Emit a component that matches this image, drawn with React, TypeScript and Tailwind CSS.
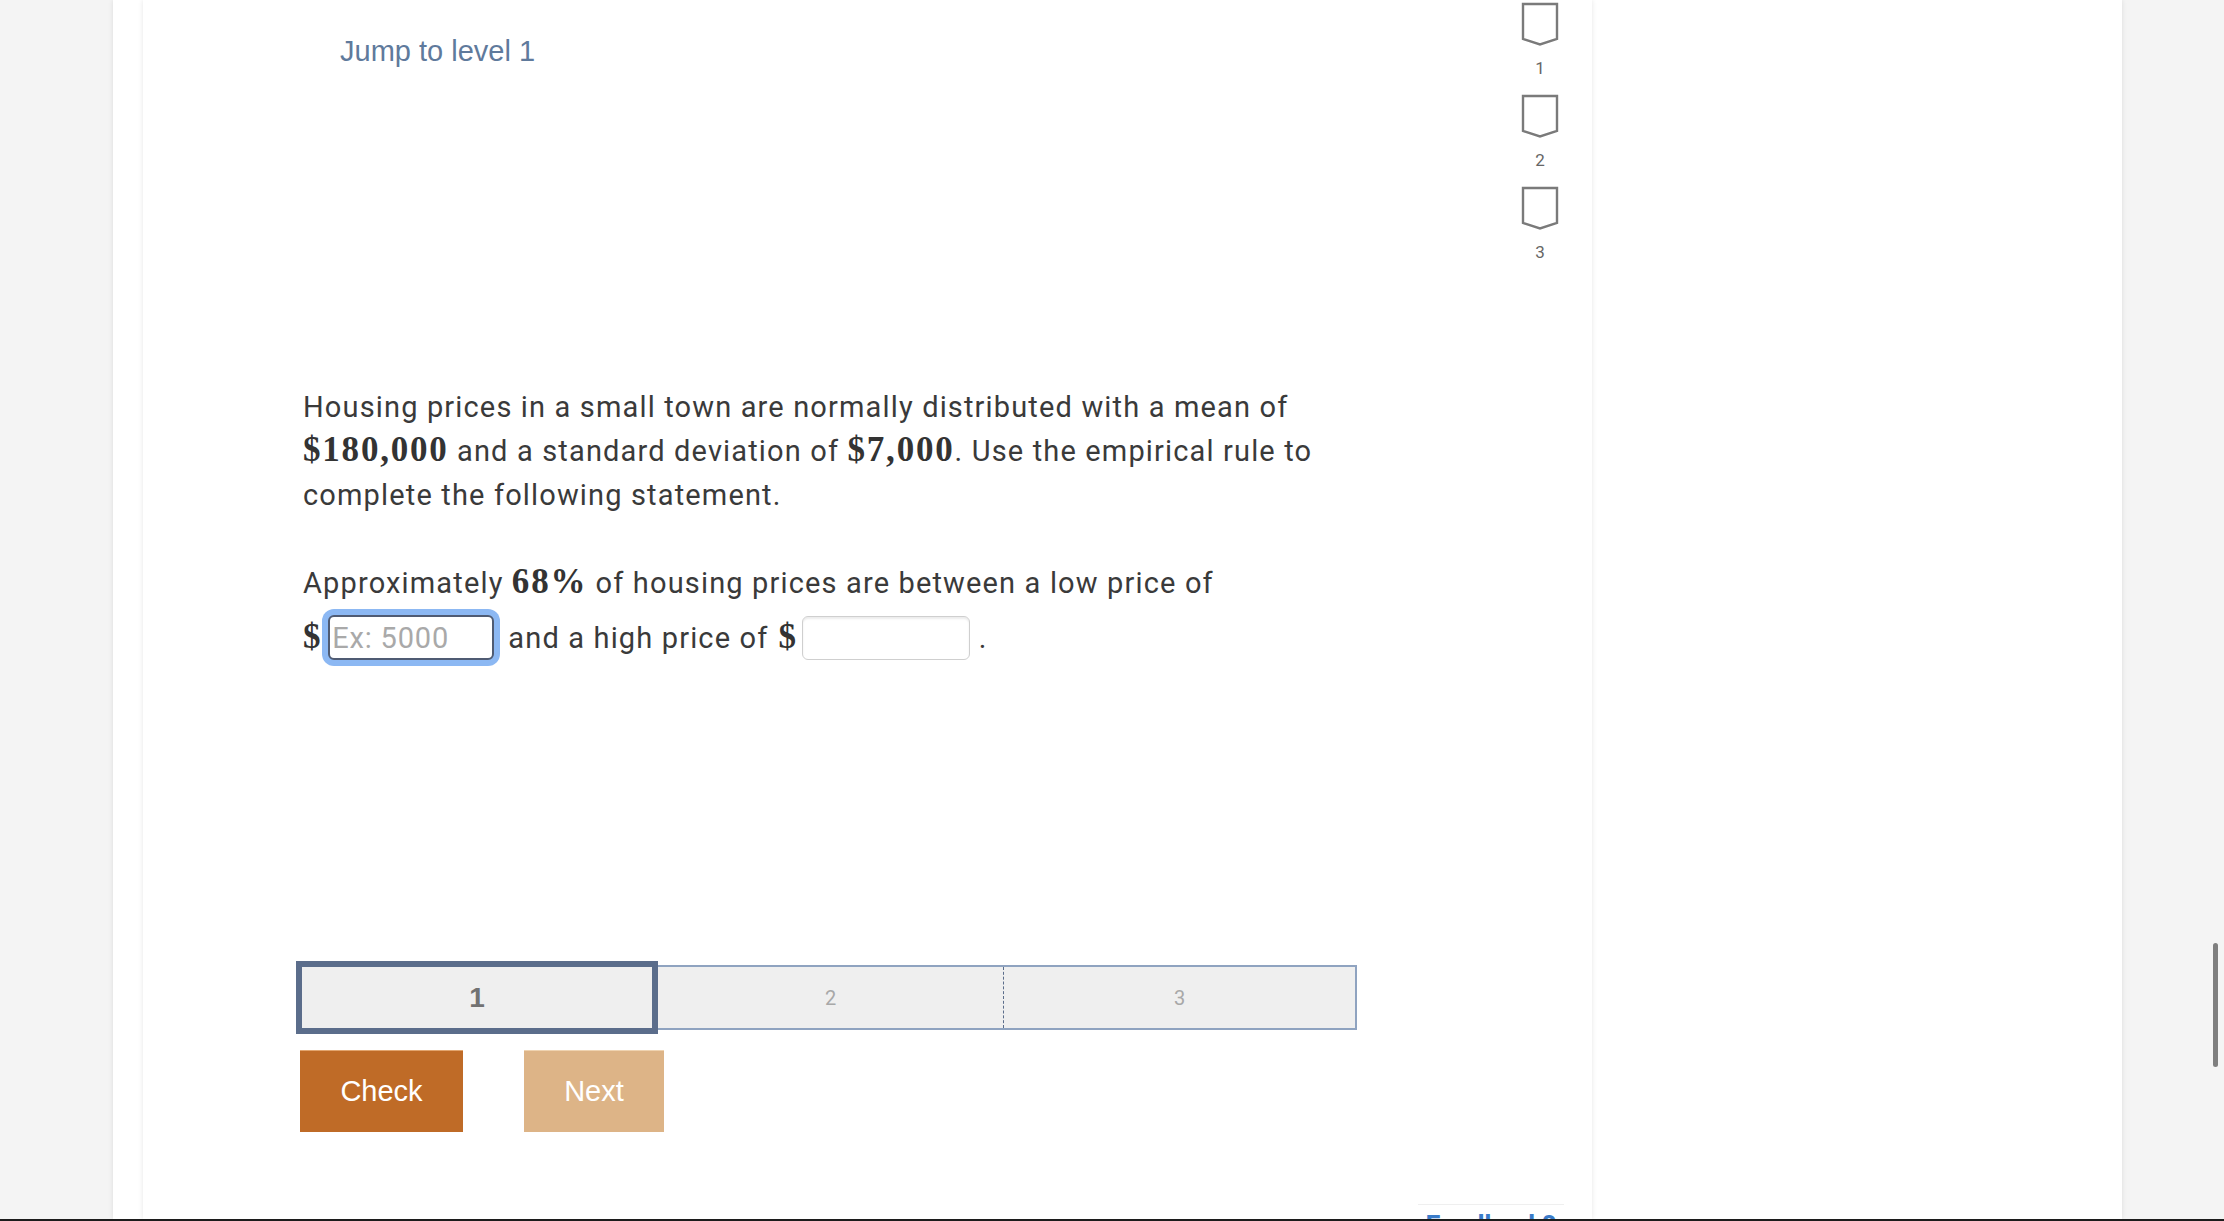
import React from "react";

const roboto = "font-['Roboto',sans-serif]";
const helv = "font-['Liberation_Sans',Arial,sans-serif]";
const mathCls =
  "font-['Liberation_Serif',serif] font-bold text-[35px] tracking-[1.8px] leading-none text-[#333]";

function Marker({ n }: { n: number }) {
  return (
    <div className="flex flex-col items-center">
      <svg width="40" height="44" viewBox="0 0 40 44" fill="none">
        <path
          d="M3 2 H37 V37 L20 42.5 L3 37 Z"
          stroke="#7a7a7a"
          strokeWidth="2.4"
          strokeLinejoin="miter"
        />
      </svg>
      <div className={`${roboto} mt-[12px] text-[17px] leading-[20px] text-[#666]`}>{n}</div>
    </div>
  );
}

export default function App() {
  return (
    <div className="relative w-[2224px] h-[1221px] overflow-hidden bg-[#f4f4f4] flex flex-col">
      <div className="flex h-[1219px] pl-[113px]">
        <div className="w-[2009px] h-full bg-white shadow-[0_0_5px_rgba(0,0,0,0.10)] pl-[30px]">
          <div className="w-[1449px] h-full bg-white shadow-[0_0_5px_rgba(0,0,0,0.10)] flex flex-col">
            <div className="flex">
              {/* main column */}
              <div className="flex-1 flex flex-col pl-[160px] pt-[33px]">
                <div className={`${helv} ml-[37px] text-[29px] leading-[36px] text-[#5f7a9c]`}>
                  Jump to level 1
                </div>

                <p
                  className={`${roboto} mt-[316px] text-[29px] leading-[44px] tracking-[1.15px] text-[#3a3a3a] whitespace-nowrap`}
                >
                  Housing prices in a small town are normally distributed with a mean of
                  <br />
                  <span className={mathCls}>$180,000</span> and a standard deviation of{" "}
                  <span className={mathCls}>$7,000</span>. Use the empirical rule to
                  <br />
                  complete the following statement.
                </p>

                <div
                  className={`${roboto} mt-[44px] text-[29px] leading-[44px] tracking-[1.15px] text-[#3a3a3a] whitespace-nowrap`}
                >
                  Approximately <span className={mathCls}>68%</span> of housing prices are between a low
                  price of
                </div>

                <div
                  className={`${roboto} mt-[10px] flex items-baseline text-[29px] leading-[44px] tracking-[1.15px] text-[#3a3a3a] whitespace-nowrap`}
                >
                  <span className={mathCls}>$</span>
                  <input
                    readOnly
                    placeholder="Ex: 5000"
                    className={`${roboto} ml-[6px] w-[166px] h-[45px] border-2 border-[#4f5b73] rounded-[6px] px-[2px] text-[29px] tracking-[0.8px] text-[#333] placeholder:text-[#a9a9a9] bg-white outline-none shadow-[0_0_0_6px_#8cb8f3]`}
                  />
                  <span className="ml-[14px]">and a high price of</span>
                  <span className={`${mathCls} ml-[10px]`}>$</span>
                  <input
                    readOnly
                    className={`${roboto} ml-[4px] w-[168px] h-[44px] border border-[#cfcfcf] rounded-[6px] px-[4px] text-[29px] bg-white outline-none shadow-[inset_0_2px_2px_rgba(0,0,0,0.08)]`}
                  />
                  <span className="ml-[9px]">.</span>
                </div>

                {/* progress bar */}
                <div className="mt-[301px] -ml-[7px] flex items-center">
                  <div
                    className={`${helv} w-[362px] h-[73px] border-[6px] border-[#5b6d8b] bg-[#efefef] flex items-center justify-center text-[28px] font-bold text-[#727272]`}
                  >
                    1
                  </div>
                  <div className="w-[699px] h-[65px] flex border-2 border-l-0 border-[#8fa3c0] bg-[#efefef]">
                    <div
                      className={`${roboto} w-[346px] h-full border-r-[1.5px] border-dashed border-[#5b6d8b] flex items-center justify-center text-[20px] text-[#a8a8a8]`}
                    >
                      2
                    </div>
                    <div
                      className={`${roboto} flex-1 h-full flex items-center justify-center text-[20px] text-[#a8a8a8]`}
                    >
                      3
                    </div>
                  </div>
                </div>

                {/* buttons */}
                <div className="mt-[16px] -ml-[3px] flex gap-[61px]">
                  <div
                    className={`${helv} w-[163px] h-[82px] bg-[#bf6b27] border-t border-[#e2a56e] flex items-center justify-center text-[29px] text-white`}
                  >
                    Check
                  </div>
                  <div
                    className={`${helv} w-[140px] h-[82px] bg-[#ddb487] border-t border-[#efd3b0] flex items-center justify-center text-[29px] text-white`}
                  >
                    Next
                  </div>
                </div>
              </div>

              {/* level markers */}
              <div className="w-[104px] flex flex-col items-center pt-[2px] gap-[16px]">
                <Marker n={1} />
                <Marker n={2} />
                <Marker n={3} />
              </div>
            </div>

            {/* feedback */}
            <div className="mt-[72px] flex justify-end pr-[28px]">
              <div
                className={`${roboto} border-t border-[#efefef] px-[8px] pt-[4px] text-[27px] leading-[34px] font-bold text-[#3a7bc8]`}
              >
                Feedback?
              </div>
            </div>
          </div>
        </div>
      </div>
      <div className="h-[2px] bg-[#1c1c1c]" />
      <div className="absolute left-[2213px] top-[943px] w-[5px] h-[124px] rounded-full bg-[#7f7f7f]" />
    </div>
  );
}
